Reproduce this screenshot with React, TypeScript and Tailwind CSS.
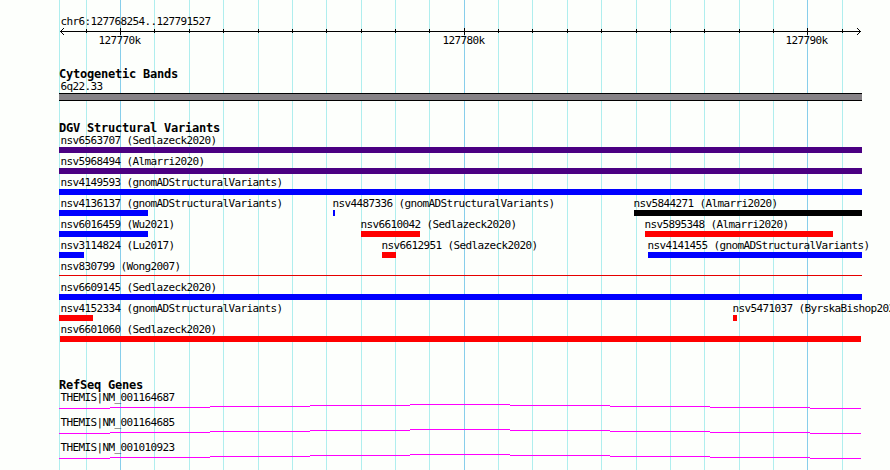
// Ruler grid, x of every vertical line
const MINOR = [86, 154, 189, 223, 258, 292, 326, 361, 395, 429, 498, 532, 567, 601, 636, 670, 704, 739, 773, 842];
const MAJOR = [120, 464, 807];

const TICK_LABELS = [
  { x: 98.5, text: "127770k" },
  { x: 442.5, text: "127780k" },
  { x: 785.5, text: "127790k" },
];

type Feature = {
  id: string;
  source: string;
  start: number;
  end: number;
  color: string;
  thin?: boolean;
};

// Labels never start left of the panel edge
const LABEL_MIN = 60.5;

const GAIN = "bg-[#0000ff]";
const LOSS = "bg-[#ff0000]";
const COMPLEX = "bg-[#4b0082]";

const VARIANTS: Feature[][] = [
  [{ id: "nsv6563707", source: "Sedlazeck2020", start: 59, end: 862, color: COMPLEX }],
  [{ id: "nsv5968494", source: "Almarri2020", start: 59, end: 862, color: COMPLEX }],
  [{ id: "nsv4149593", source: "gnomADStructuralVariants", start: 59, end: 862, color: GAIN }],
  [
    { id: "nsv4136137", source: "gnomADStructuralVariants", start: 59, end: 148, color: GAIN },
    { id: "nsv4487336", source: "gnomADStructuralVariants", start: 333, end: 335, color: GAIN },
    { id: "nsv5844271", source: "Almarri2020", start: 634, end: 862, color: "bg-black" },
  ],
  [
    { id: "nsv6016459", source: "Wu2021", start: 59, end: 148, color: GAIN },
    { id: "nsv6610042", source: "Sedlazeck2020", start: 361, end: 420, color: LOSS },
    { id: "nsv5895348", source: "Almarri2020", start: 645, end: 833, color: LOSS },
  ],
  [
    { id: "nsv3114824", source: "Lu2017", start: 59, end: 84, color: GAIN },
    { id: "nsv6612951", source: "Sedlazeck2020", start: 382, end: 396, color: LOSS },
    { id: "nsv4141455", source: "gnomADStructuralVariants", start: 648, end: 862, color: GAIN },
  ],
  [{ id: "nsv830799", source: "Wong2007", start: 59, end: 862, color: "bg-[#e60000]", thin: true }],
  [{ id: "nsv6609145", source: "Sedlazeck2020", start: 59, end: 862, color: GAIN }],
  [
    { id: "nsv4152334", source: "gnomADStructuralVariants", start: 59, end: 93, color: LOSS },
    { id: "nsv5471037", source: "ByrskaBishop2020", start: 733, end: 737, color: LOSS },
  ],
  [{ id: "nsv6601060", source: "Sedlazeck2020", start: 60, end: 861, color: LOSS }],
];

const GENES = ["THEMIS|NM_001164687", "THEMIS|NM_001164685", "THEMIS|NM_001010923"];

function Grid() {
  return (
    <svg className="absolute inset-0" width="890" height="470" shapeRendering="crispEdges">
      <rect x={59} y={0} width={1} height={470} fill="#afeeee" />
      {MINOR.map((x) => (
        <rect key={x} x={x} y={0} width={1} height={470} fill="#afeeee" />
      ))}
      {MAJOR.map((x) => (
        <rect key={x} x={x} y={0} width={1} height={470} fill="#87ceeb" />
      ))}
    </svg>
  );
}

function Ruler() {
  return (
    <svg className="-mt-px block" width="890" height="9" shapeRendering="crispEdges">
      <rect x={60} y={4} width={801} height={1} />
      {[1, 2, 3].map((d) => (
        <g key={d}>
          <rect x={60 + d} y={4 - d} width={1} height={1} />
          <rect x={60 + d} y={4 + d} width={1} height={1} />
          <rect x={860 - d} y={4 - d} width={1} height={1} />
          <rect x={860 - d} y={4 + d} width={1} height={1} />
        </g>
      ))}
      {MINOR.map((x) => (
        <rect key={x} x={x} y={2} width={1} height={4} />
      ))}
      {MAJOR.map((x) => (
        <rect key={x} x={x} y={1} width={1} height={7} />
      ))}
    </svg>
  );
}

function TrackTitle({ children }: { children: string }) {
  return (
    <h2 className="ml-[59px] h-[13px] text-[12px] leading-3 font-bold tracking-[-0.225px]">{children}</h2>
  );
}

function VariantRow({ features }: { features: Feature[] }) {
  return (
    <div className="grid h-[21px] grid-cols-[890px]">
      {features.map((f) => (
        <div key={f.id} className="[grid-area:1/1]">
          <p className="h-3" style={{ marginLeft: Math.max(LABEL_MIN, f.start - 0.5) }}>
            {f.id} ({f.source})
          </p>
          <div
            className={`${f.color} ${f.thin ? "mt-[2px] h-px" : "h-1.5"}`}
            style={{ marginLeft: f.start, width: f.end - f.start }}
          />
        </div>
      ))}
    </div>
  );
}

// Intron drawn as a shallow peak, one pixel per step
function Gene({ name }: { name: string }) {
  const edges = [59, 110, 210, 310, 410, 510, 610, 710, 810, 861];
  return (
    <div className="h-[25px]">
      <p className="ml-[60.5px] h-[11px]">{name}</p>
      <svg className="block" width="890" height="6" shapeRendering="crispEdges">
        {edges.slice(0, -1).map((x, i) => (
          <rect key={x} x={x} y={1 + Math.abs(i - 4)} width={edges[i + 1] - x} height={1} fill="#ff00ff" />
        ))}
      </svg>
    </div>
  );
}

export default function App() {
  return (
    <div className="relative h-[470px] w-[890px] overflow-hidden bg-[#fdfffc] font-['DejaVu_Sans_Mono',monospace] text-[11px] leading-3 tracking-[-0.622px] whitespace-nowrap text-black">
      <Grid />
      <main className="relative">
        <section className="h-[68px] pt-4">
          <p className="ml-[60.5px] h-3">chr6:127768254..127791527</p>
          <Ruler />
          <div className="-mt-px grid h-3">
            {TICK_LABELS.map((t) => (
              <span key={t.x} className="[grid-area:1/1]" style={{ marginLeft: t.x }}>
                {t.text}
              </span>
            ))}
          </div>
        </section>

        <section className="h-[54px]">
          <TrackTitle>Cytogenetic Bands</TrackTitle>
          <p className="ml-[60.5px] h-3">6q22.33</p>
          <div className="ml-[59px] h-2 w-[803px] border-y border-black bg-[#868286]" />
        </section>

        <section className="h-[257px]">
          <TrackTitle>DGV Structural Variants</TrackTitle>
          {VARIANTS.map((row) => (
            <VariantRow key={row[0].id} features={row} />
          ))}
        </section>

        <section>
          <TrackTitle>RefSeq Genes</TrackTitle>
          {GENES.map((g) => (
            <Gene key={g} name={g} />
          ))}
        </section>
      </main>
    </div>
  );
}
